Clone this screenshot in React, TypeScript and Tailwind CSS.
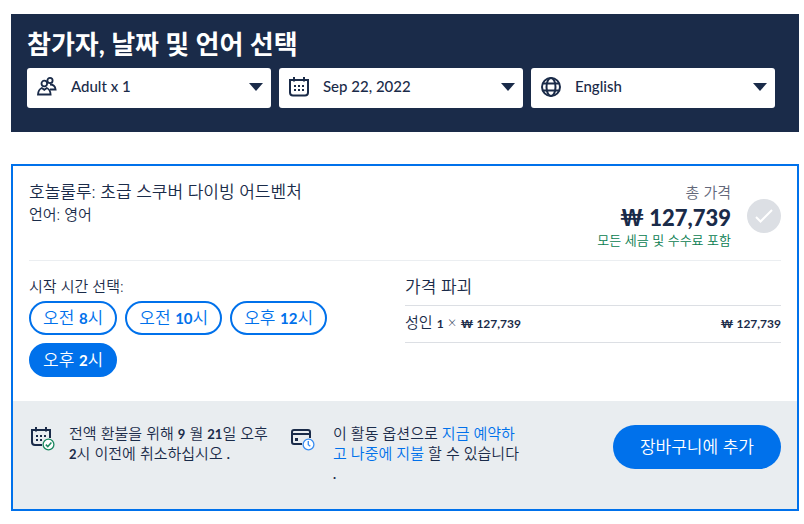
import React, { useState } from "react";

const times = [
  { period: "오전", hour: "8" },
  { period: "오전", hour: "10" },
  { period: "오후", hour: "12" },
  { period: "오후", hour: "2" },
];

const Num = ({ children, className = "text-[13px]" }: { children: React.ReactNode; className?: string }) => (
  <span className={`font-bold ${className} leading-none`}>{children}</span>
);

const PeopleIcon = () => (
  <svg width="20" height="20" viewBox="0 0 20 20" fill="none" stroke="currentColor" strokeWidth="1.8">
    <circle cx="13" cy="3.500" r="2.600" />
    <path d="M13 7.500c3 0 5.200 2 5.600 5H13" />
    <circle cx="7.300" cy="6.500" r="2.800" fill="#fff" />
    <path d="M1 17.500c.2-3.600 1.800-5.600 3.800-6.500l2.500 1.800L9.800 11c2 .9 3.600 2.900 3.800 6.500z" fill="#fff" />
  </svg>
);

const CalendarIcon = () => (
  <svg width="20" height="20" viewBox="0 0 20 20" fill="none" stroke="currentColor" strokeWidth="2">
    <path d="M1 3v12.500a3 3 0 0 0 3 3h12a3 3 0 0 0 3-3V3z" />
    <path d="M5 0v4.500M15 0v4.500" />
    <path d="M5 9h11M5 13h11" strokeDasharray="2 2" />
  </svg>
);

const GlobeIcon = () => (
  <svg width="20" height="20" viewBox="0 0 20 20" fill="none" stroke="currentColor" strokeWidth="2">
    <circle cx="10" cy="10" r="9" />
    <ellipse cx="10" cy="10" rx="4.500" ry="9" />
    <path d="M2 6.500h16M2 13.500h16" />
  </svg>
);

const RefundIcon = () => (
  <svg className="mt-1 shrink-0" width="24" height="24" viewBox="0 0 24 24" fill="none" stroke="currentColor" strokeWidth="2">
    <path d="M11 18H4a3 3 0 0 1-3-3V3h18v8" />
    <path d="M5 0v4.500M15 0v4.500" />
    <path d="M5 9h11M5 13h6" strokeDasharray="2 2" />
    <circle cx="17.500" cy="17.500" r="5.400" fill="#fff" stroke="#1d8961" strokeWidth="1.300" />
    <path d="m14.800 17.600 2 2 3.600-4" stroke="#1d8961" strokeWidth="1.500" />
  </svg>
);

const PayLaterIcon = () => (
  <svg className="mt-1 shrink-0" width="24" height="24" viewBox="0 0 24 24" fill="none" stroke="currentColor" strokeWidth="2">
    <path d="M11 17H3a2 2 0 0 1-2-2V5a2 2 0 0 1 2-2h14a2 2 0 0 1 2 2v6M1 7h18" />
    <path d="M4 12.500h3" strokeWidth="3" />
    <circle cx="17.500" cy="17.500" r="5.400" fill="#fff" stroke="#3b8ef0" strokeWidth="1.300" />
    <path d="M17.300 14v3.700l2 1.500" stroke="#3b8ef0" strokeWidth="1.400" />
  </svg>
);

const Picker = ({ label, icon, options }: { label: string; icon: React.ReactNode; options: string[] }) => (
  <div className="relative flex-1">
    <span className="pointer-events-none absolute top-0 bottom-0.5 left-2.5 flex items-center">{icon}</span>
    <select
      aria-label={label}
      className="h-10 w-full appearance-none rounded-[3px] bg-white pr-8 pb-1 pl-11 text-[15px] font-medium"
    >
      {options.map((option) => (
        <option key={option}>{option}</option>
      ))}
    </select>
    <span className="pointer-events-none absolute top-0 right-2 bottom-0.5 flex items-center">
      <svg width="14" height="8" viewBox="0 0 14 8" fill="currentColor">
        <path d="M0 0h14L7 8z" />
      </svg>
    </span>
  </div>
);

const App = () => {
  const [selected, setSelected] = useState(3);

  return (
    <main className="flex flex-col gap-8 pt-3.5 pr-[5px] pl-[11px] font-['Lato','Noto_Sans_CJK_KR',sans-serif] text-[#1a2b49]">
      <section className="bg-[#1a2b49] pt-3 pr-6 pb-6 pl-4">
        <h1 className="pb-1.5 text-[26px] leading-9 font-bold text-white">참가자, 날짜 및 언어 선택</h1>
        <div className="flex gap-2">
          <Picker label="참가자" icon={<PeopleIcon />} options={["Adult x 1", "Adult x 2"]} />
          <Picker label="날짜" icon={<CalendarIcon />} options={["Sep 22, 2022", "Sep 23, 2022"]} />
          <Picker label="언어" icon={<GlobeIcon />} options={["English", "한국어"]} />
        </div>
      </section>

      <section className="border-2 border-[#0071eb] font-[350]">
        <div className="px-4">
          <div className="flex items-start justify-between border-b border-[#ebeef1] pt-3 pb-2.5">
            <div className="pt-0.5">
              <h2 className="text-[17px] leading-6">호놀룰루: 초급 스쿠버 다이빙 어드벤처</h2>
              <p className="text-[15px] leading-5">언어: 영어</p>
            </div>
            <div className="flex items-center gap-4">
              <div className="text-right">
                <p className="text-[15px] leading-7 text-[#63687a]">총 가격</p>
                <p className="text-[22px] leading-6 font-black">₩ 127,739</p>
                <p className="text-[13px] leading-5 text-[#077c4f]">모든 세금 및 수수료 포함</p>
              </div>
              <span className="mt-1 flex size-[34px] items-center justify-center rounded-full bg-[#dcdfe4]">
                <svg width="18" height="14" viewBox="0 0 18 14" fill="none" stroke="#fff" strokeWidth="2">
                  <path d="m1 8 4.500 4.500L17 1" />
                </svg>
              </span>
            </div>
          </div>

          <div className="grid grid-cols-2 pt-3.5 pb-6">
            <div>
              <p className="pb-1 text-[15px] leading-[22px]">시작 시간 선택:</p>
              <div className="flex flex-wrap gap-2">
                {times.map((time, i) => (
                  <button
                    key={i}
                    type="button"
                    aria-pressed={i === selected}
                    onClick={() => setSelected(i)}
                    className={`h-[34px] rounded-full border-2 border-[#0071eb] px-3 text-[17px] leading-6 ${
                      i === selected ? "bg-[#0071eb] text-white" : "bg-white text-[#0071eb]"
                    }`}
                  >
                    {time.period} <Num className="text-[15px]">{time.hour}</Num>시
                  </button>
                ))}
              </div>
            </div>
            <div>
              <h3 className="pb-1.5 text-[17px] leading-6">가격 파괴</h3>
              <table className="w-full border-y border-[#dcdfe4] text-[15px]">
                <tbody>
                  <tr>
                    <td className="h-[37px] pb-[3px]">성인 <Num className="text-xs">1</Num> × <Num className="text-xs">₩ 127,739</Num></td>
                    <td className="pb-[3px] text-right"><Num className="text-xs">₩ 127,739</Num></td>
                  </tr>
                </tbody>
              </table>
            </div>
          </div>
        </div>

        <div className="flex items-start bg-[#e9edf0] pt-[22px] pr-4 pb-[26px] pl-[18px]">
          <div className="flex w-[260px] gap-3.5 pr-5">
            <RefundIcon />
            <p className="flex-1 text-[15px] leading-5">
              전액 환불을 위해 <Num>9</Num> 월 <Num>21</Num>일 오후 <Num>2</Num>시 이전에 취소하십시오 <Num>.</Num>
            </p>
          </div>
          <div className="flex w-[260px] gap-[18px] pr-7">
            <PayLaterIcon />
            <p className="flex-1 text-[15px] leading-5">
              이 활동 옵션으로 <a href="#pay-later" className="text-[#0071eb]">지금 예약하고 나중에 지불</a> 할 수 있습니다 <Num>.</Num>
            </p>
          </div>
          <button type="button" className="mt-0.5 ml-auto h-11 rounded-full bg-[#0071eb] px-[27px] text-[17px] font-[350] text-white">
            장바구니에 추가
          </button>
        </div>
      </section>
    </main>
  );
};

export default App;
